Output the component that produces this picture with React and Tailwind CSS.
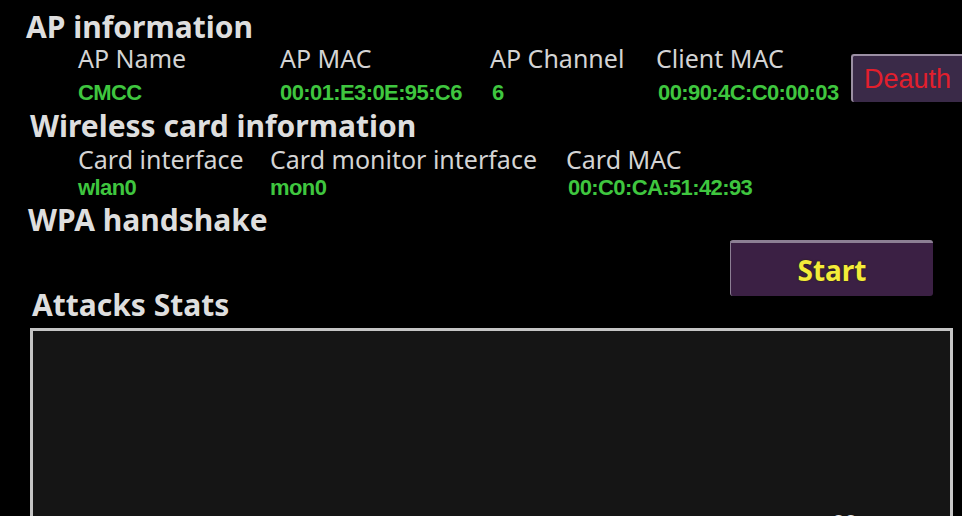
export default function App() {
  const heading = "font-['Noto_Sans',sans-serif] font-bold text-[30px] text-[#dedede] whitespace-nowrap";
  const label = "font-['Noto_Sans',sans-serif] text-[25px] leading-[26px] text-[#d4d4d4] whitespace-nowrap";
  const value = "font-['Liberation_Sans',Arial,sans-serif] font-bold text-[22px] leading-[22px] text-[#3fc63f] tracking-[-0.6px] whitespace-nowrap";

  return (
    <div className="w-[962px] h-[516px] bg-black overflow-hidden">
      {/* AP information */}
      <div className={`${heading} leading-[32px] pt-[11px] pl-[26px]`}>
        AP information
      </div>
      <div className="flex mt-[2px]">
        <div className="pl-[78px]">
          <div className="grid grid-cols-[202px_210px_166px_190px]">
            <div className={label}>AP Name</div>
            <div className={label}>AP MAC</div>
            <div className={label}>AP Channel</div>
            <div className={label}>Client MAC</div>
          </div>
          <div className="grid grid-cols-[202px_212px_166px_188px] mt-[11px]">
            <div className={value}>CMCC</div>
            <div className={value}>00:01:E3:0E:95:C6</div>
            <div className={value}>6</div>
            <div className={value}>00:90:4C:C0:00:03</div>
          </div>
        </div>
        <button className="mt-[9px] ml-[5px] w-[120px] h-[48px] shrink-0 bg-[#3a2a48] border-t-2 border-l-2 border-[#9b8fa3] rounded-[3px] text-left pl-[11px] font-['Liberation_Sans',Arial,sans-serif] text-[27px] text-[#e21f2d]">
          Deauth
        </button>
      </div>

      {/* Wireless card information */}
      <div className={`${heading} leading-[30px] mt-[7px] pl-[30px]`}>
        Wireless card information
      </div>
      <div className="pl-[78px]">
        <div className="grid grid-cols-[192px_296px_200px] mt-[5px]">
          <div className={label}>Card interface</div>
          <div className={label}>Card monitor interface</div>
          <div className={label}>Card MAC</div>
        </div>
        <div className="grid grid-cols-[192px_298px_200px] mt-[5px]">
          <div className={value}>wlan0</div>
          <div className={value}>mon0</div>
          <div className={value}>00:C0:CA:51:42:93</div>
        </div>
      </div>

      {/* WPA handshake */}
      <div className={`${heading} leading-[30px] mt-[6px] pl-[28px]`}>
        WPA handshake
      </div>
      <div className="flex items-start justify-between mt-[5px] pr-[29px]">
        <div className={`${heading} leading-[30px] mt-[50px] pl-[32px]`}>
          Attacks Stats
        </div>
        <button className="w-[203px] h-[56px] bg-[#3b2044] border-t-[3px] border-l border-[#8c7f94] rounded-[3px] font-['Noto_Sans',sans-serif] font-bold text-[28px] text-[#f3ec3a] [text-shadow:0_0_2px_#2a2000]">
          Start
        </button>
      </div>

      {/* stats box */}
      <div className="ml-[30px] mt-[8px] w-[923px] h-[200px] border-[3px] border-[#c4c4c4] bg-[#151515] flex justify-end pr-[93px] pt-[181px]">
        <div className="font-['Liberation_Sans',Arial,sans-serif] font-bold text-[22px] leading-[22px] text-[#e8e8e8]">
          00
        </div>
      </div>
    </div>
  );
}
